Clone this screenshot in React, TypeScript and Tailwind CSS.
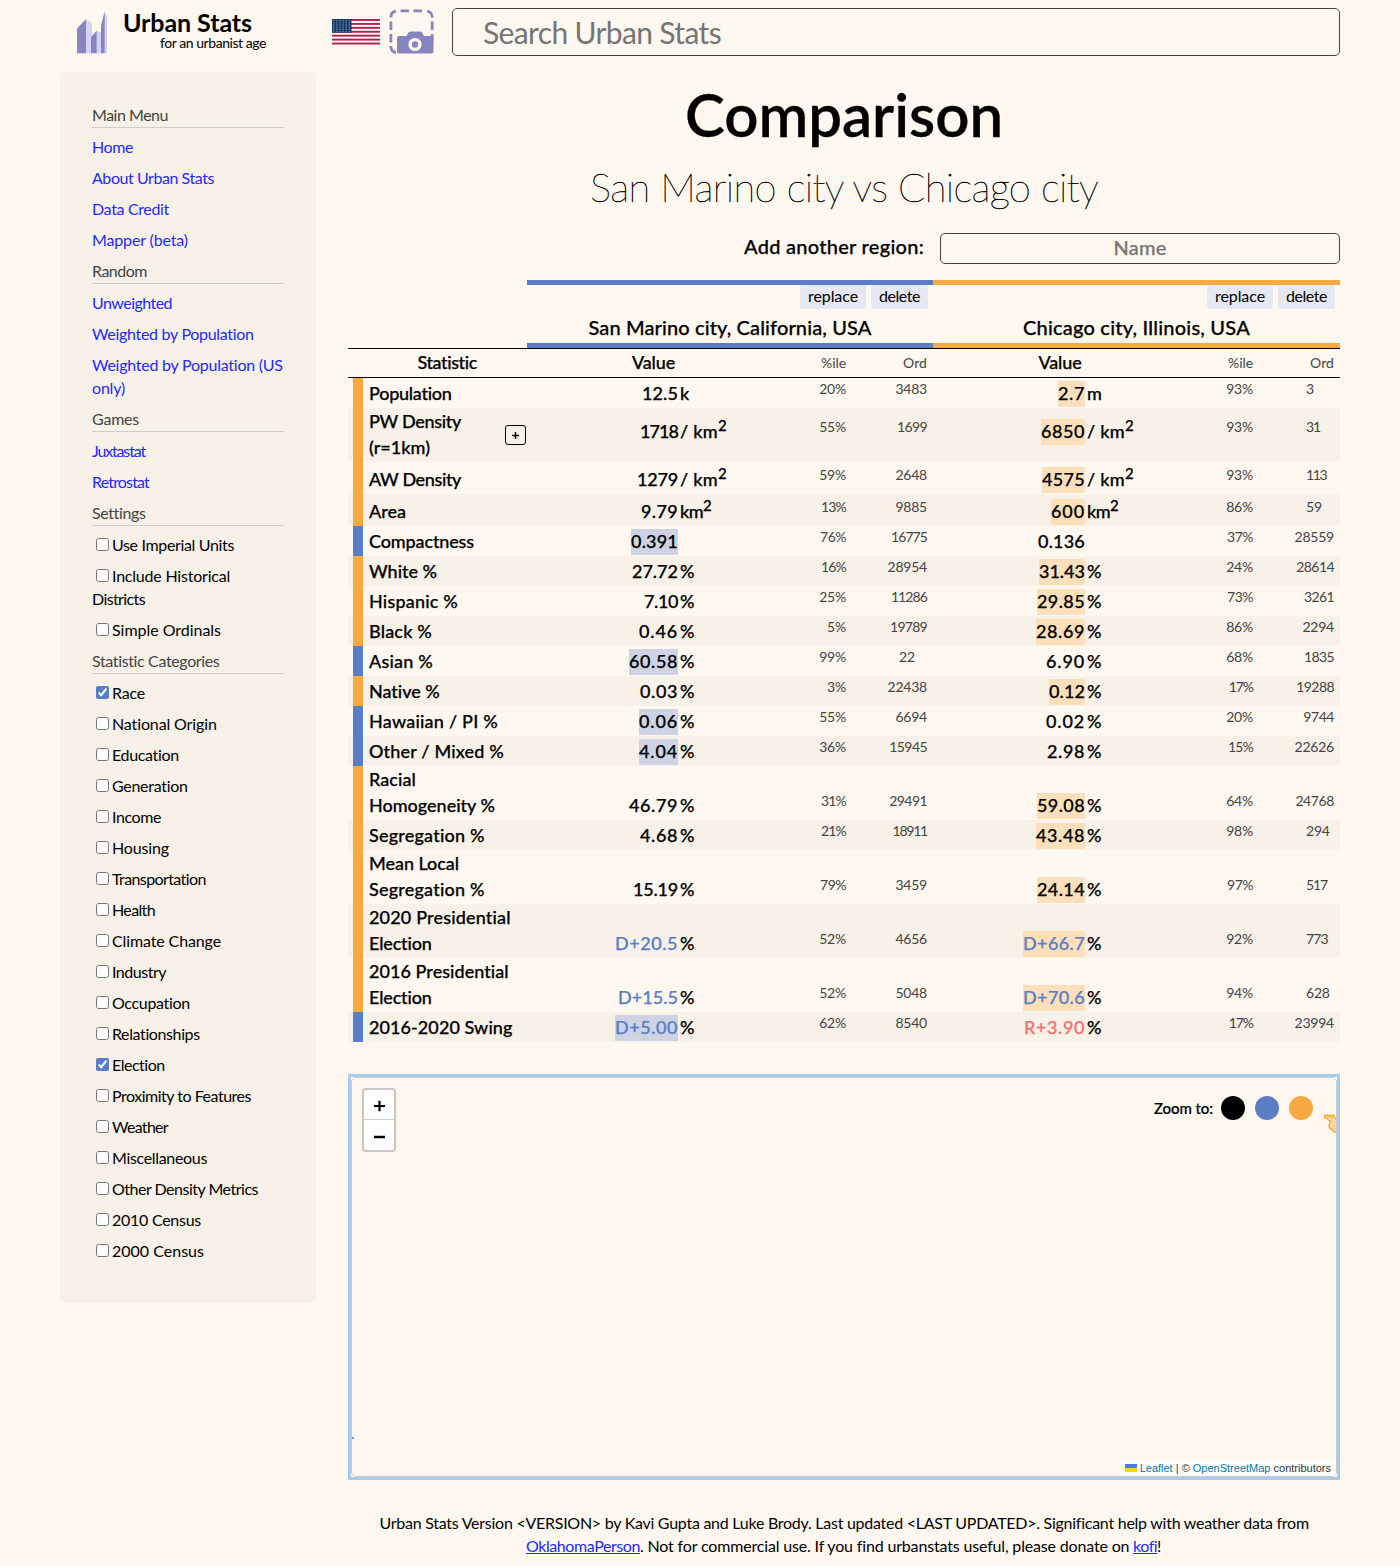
import React, { useLayoutEffect, useRef, useState } from "react";

/** Single line of text whose tracking is tuned so that it fills `w` pixels. */
function Fit({ t, w, className = "" }: { t: string; w: number; className?: string }) {
  const ref = useRef<HTMLSpanElement>(null);
  const [spacing, setSpacing] = useState(0);
  useLayoutEffect(() => {
    if (ref.current) {
      const natural = ref.current.getBoundingClientRect().width - spacing * t.length;
      setSpacing((w - natural) / t.length);
    }
  }, [t, w]);
  return (
    <span className={"inline-block whitespace-nowrap text-left " + className} style={{ width: w }}>
      <span ref={ref} style={{ letterSpacing: spacing }}>
        {t}
      </span>
    </span>
  );
}

type Text = [string, number];

const menu: { title: Text; links: Text[][] }[] = [
  {
    title: ["Main Menu", 76],
    links: [[["Home", 41]], [["About Urban Stats", 122]], [["Data Credit", 77]], [["Mapper (beta)", 96]]],
  },
  {
    title: ["Random", 55],
    links: [
      [["Unweighted", 80]],
      [["Weighted by Population", 162]],
      [["Weighted by Population (US", 191], ["only)", 33]],
    ],
  },
  { title: ["Games", 47], links: [[["Juxtastat", 53]], [["Retrostat", 57]]] },
];

const checks: { title: Text; items: { t: Text; rest?: Text; on?: boolean }[] }[] = [
  {
    title: ["Settings", 53],
    items: [
      { t: ["Use Imperial Units", 122] },
      { t: ["Include Historical", 118], rest: ["Districts", 53] },
      { t: ["Simple Ordinals", 109] },
    ],
  },
  {
    title: ["Statistic Categories", 128],
    items: [
      { t: ["Race", 33], on: true },
      { t: ["National Origin", 105] },
      { t: ["Education", 67] },
      { t: ["Generation", 76] },
      { t: ["Income", 49] },
      { t: ["Housing", 57] },
      { t: ["Transportation", 94] },
      { t: ["Health", 43] },
      { t: ["Climate Change", 109] },
      { t: ["Industry", 54] },
      { t: ["Occupation", 78] },
      { t: ["Relationships", 88] },
      { t: ["Election", 53], on: true },
      { t: ["Proximity to Features", 139] },
      { t: ["Weather", 56] },
      { t: ["Miscellaneous", 95] },
      { t: ["Other Density Metrics", 146] },
      { t: ["2010 Census", 89] },
      { t: ["2000 Census", 92] },
    ],
  },
];

interface Cell {
  v: Text;
  p: string;
  o: string;
}
interface Row {
  name: Text[];
  unit: string;
  win: 0 | 1;
  size?: "pw" | "sup";
  a: Cell;
  b: Cell;
}
const c = (t: string, w: number, p: string, o: string): Cell => ({ v: [t, w], p, o });

const rows: Row[] = [
  { name: [["Population", 83]], unit: "", win: 1, a: c("12.5", 36, "20%", "3483"), b: c("2.7", 27, "93%", "3") },
  { name: [["PW Density", 92], ["(r=1km)", 61]], unit: "/ km", win: 1, size: "pw", a: c("1718", 38, "55%", "1699"), b: c("6850", 44, "93%", "31") },
  { name: [["AW Density", 92]], unit: "/ km", win: 1, size: "sup", a: c("1279", 41, "59%", "2648"), b: c("4575", 43, "93%", "113") },
  { name: [["Area", 37]], unit: "km", win: 1, size: "sup", a: c("9.79", 37, "13%", "9885"), b: c("600", 34, "86%", "59") },
  { name: [["Compactness", 105]], unit: "", win: 0, a: c("0.391", 47, "76%", "16775"), b: c("0.136", 47, "37%", "28559") },
  { name: [["White %", 68]], unit: "%", win: 1, a: c("27.72", 46, "16%", "28954"), b: c("31.43", 46, "24%", "28614") },
  { name: [["Hispanic %", 89]], unit: "%", win: 1, a: c("7.10", 34, "25%", "11286"), b: c("29.85", 48, "73%", "3261") },
  { name: [["Black %", 63]], unit: "%", win: 1, a: c("0.46", 39, "5%", "19789"), b: c("28.69", 49, "86%", "2294") },
  { name: [["Asian %", 64]], unit: "%", win: 0, a: c("60.58", 49, "99%", "22"), b: c("6.90", 39, "68%", "1835") },
  { name: [["Native %", 71]], unit: "%", win: 1, a: c("0.03", 38, "3%", "22438"), b: c("0.12", 36, "17%", "19288") },
  { name: [["Hawaiian / PI %", 129]], unit: "%", win: 0, a: c("0.06", 39, "55%", "6694"), b: c("0.02", 39, "20%", "9744") },
  { name: [["Other / Mixed %", 135]], unit: "%", win: 0, a: c("4.04", 39, "36%", "15945"), b: c("2.98", 38, "15%", "22626") },
  { name: [["Racial", 47], ["Homogeneity %", 126]], unit: "%", win: 1, a: c("46.79", 49, "31%", "29491"), b: c("59.08", 48, "64%", "24768") },
  { name: [["Segregation %", 116]], unit: "%", win: 1, a: c("4.68", 38, "21%", "18911"), b: c("43.48", 49, "98%", "294") },
  { name: [["Mean Local", 90], ["Segregation %", 116]], unit: "%", win: 1, a: c("15.19", 45, "79%", "3459"), b: c("24.14", 48, "97%", "517") },
  { name: [["2020 Presidential", 142], ["Election", 63]], unit: "%", win: 1, a: c("D+20.5", 63, "52%", "4656"), b: c("D+66.7", 62, "92%", "773") },
  { name: [["2016 Presidential", 140], ["Election", 63]], unit: "%", win: 1, a: c("D+15.5", 60, "52%", "5048"), b: c("D+70.6", 62, "94%", "628") },
  { name: [["2016-2020 Swing", 143.5]], unit: "%", win: 0, a: c("D+5.00", 63, "62%", "8540"), b: c("R+3.90", 61, "17%", "23994") },
];

const unitWidths: Record<string, number> = { "%": 15, "/ km": 38, km: 23, k: 9, m: 14 };

/* Advance widths at 14px of the light figures in the percentile and ordinal columns. */
const small = (s: string) =>
  s.split("").reduce((n, ch) => n + (ch === "1" ? 6.2 : ch === "%" ? 11 : ch === "7" ? 7 : 7.9), 0);

function Values({ cell, unit, hl, size }: { cell: Cell; unit: string; hl: string; size?: string }) {
  const first = cell.v[0][0];
  const color = first === "D" ? "text-[#5a7dc3]" : first === "R" ? "text-[#f96d6d]" : "";
  return (
    <div className={"flex flex-1 items-end justify-end pr-[6px] leading-[26px] " + (size === "pw" ? "pb-[17px]" : "pb-px")}>
      <div className={"flex flex-1 justify-end text-[18px] font-medium [-webkit-text-stroke:0.25px] " + color}>
        <span className={"h-[26px] leading-[25px] " + hl}>
          <Fit t={cell.v[0]} w={cell.v[1]} />
        </span>
      </div>
      <div className="flex h-[26px] w-[102px] pl-[2px] text-[18px] font-medium leading-[25px] [-webkit-text-stroke:0.25px]">
        {unit && <Fit t={unit} w={unitWidths[unit]} />}
        {unit.endsWith("km") && <span className="-mt-[6px] text-[15px]">2</span>}
      </div>
      <div className="flex w-[66px] justify-end pb-[5px] text-[14px] text-[#444444]">
        <Fit t={cell.p} w={small(cell.p)} />
      </div>
      <div className="flex w-[81px] justify-end pb-[5px] text-[14px] text-[#444444]">
        <span className="min-w-[28px]">
          <Fit t={cell.o} w={small(cell.o)} />
        </span>
      </div>
    </div>
  );
}

function RegionHeader({ bar, name }: { bar: string; name: Text }) {
  return (
    <div className={"flex h-[68px] flex-col border-y-[5px] " + bar}>
      <div className="flex justify-end gap-[5px] pr-[5px] text-[16px] leading-[22px]">
        <button className="h-6 rounded-[3px] bg-[#e6e9f1] px-2 pb-0.5">
          <Fit t="replace" w={50} />
        </button>
        <button className="h-6 rounded-[3px] bg-[#e6e9f1] px-2 pb-0.5">
          <Fit t="delete" w={41} />
        </button>
      </div>
      <div className="pt-1 text-center text-[20px] font-medium leading-[29px] [-webkit-text-stroke:0.25px]">
        <Fit t={name[0]} w={name[1]} />
      </div>
    </div>
  );
}

function ColumnLabels() {
  return (
    <div className="flex flex-1 justify-end pr-[6px]">
      <div className="flex-1 text-center text-[18px] font-medium leading-[27px] [-webkit-text-stroke:0.25px]">
        <Fit t="Value" w={43} />
      </div>
      <div className="flex w-[66px] justify-end text-[14px] text-[#444444]">
        <Fit t="%ile" w={25} />
      </div>
      <div className="flex w-[81px] justify-end text-[14px] text-[#444444]">
        <Fit t="Ord" w={24} />
      </div>
    </div>
  );
}

function Logo() {
  return (
    <svg width="32" height="44" viewBox="0 0 32 44">
      <path fill="#d4d1fa" d="m10 9 6 4.500v29.800h-6z" />
      <path fill="#8884c0" d="M1 18.500 10 9v34.300H1z" />
      <path fill="#d4d1fa" d="m20.500 20.700 5 2v20.600h-5z" />
      <path fill="#8884c0" d="m15 27 5.700-6.300v22.600H15z" />
      <path fill="#d4d1fa" d="M28.500 1.300 31 7v36.300h-2.500z" />
      <path fill="#8884c0" d="m25 15.500 3.700-14.200v42H25z" />
    </svg>
  );
}

function Flag() {
  return (
    <svg width="48" height="25.5" viewBox="0 0 48 26" preserveAspectRatio="none">
      <rect width="48" height="26" fill="#fff" />
      {[0, 4, 8, 12, 16, 20, 24].map((y) => (
        <rect key={y} y={y} width="48" height="2" fill="#b9204a" />
      ))}
      <rect width="19.500" height="14" fill="#163c69" />
      {[0, 1, 2, 3, 4, 5].map((r) =>
        [0, 1, 2, 3, 4, 5].map((k) => (
          <circle key={r + "-" + k} cx={1.8 + k * 3.1} cy={1.6 + r * 2.2} r=".6" fill="#9fb3ca" />
        ))
      )}
    </svg>
  );
}

function CameraIcon() {
  return (
    <svg width="46" height="46" viewBox="0 0 46 46" fill="none">
      <g stroke="#8884c0" strokeWidth="2.800">
        <path d="M1.900 8.500V7.500a6 6 0 0 1 5-5.400M38.200 2.100a6 6 0 0 1 5 5.900v.8M1.900 37v1.500a6 6 0 0 0 5 5" />
        <path d="M11.500 1.900h8.500M24.500 1.900H33M1.900 12.500v8.500M1.900 25v8.500M43.200 12.500v8.500M43.200 25v7" />
      </g>
      <path
        fill="#8884c0"
        d="M10 27h7.500l1.800-3.200q.8-1.300 2.200-1.300h9.500q1.400 0 2.200 1.300L35 27h7.500q2 0 2 2v13.500q0 2-2 2H10q-2 0-2-2V29q0-2 2-2z"
      />
      <circle cx="26" cy="35.500" r="4.900" stroke="#fff8f0" strokeWidth="3.400" />
    </svg>
  );
}

export default function App() {
  return (
    <div className="h-[1566px] w-[1400px] overflow-hidden bg-[#fff8f0] px-[60px] pt-2 font-['Lato',sans-serif] text-black">
      <header className="flex h-12">
        <div className="flex w-[272px] pl-4 pt-0.5">
          <Logo />
          <div className="pl-[15px]">
            <div className="-mt-0.5 text-[25px] font-bold leading-[28px]">
              <Fit t="Urban Stats" w={129} />
            </div>
            <div className="pl-[37px] text-[14px] leading-[13px]">
              <Fit t="for an urbanist age" w={106} />
            </div>
          </div>
        </div>
        <div className="pt-[11px]">
          <Flag />
        </div>
        <div className="w-[72px] pl-[9.4px] pt-px">
          <CameraIcon />
        </div>
        <div className="flex-1 rounded-[5px] border border-[#444444] pl-[30px] text-[30px] leading-[46px] text-[#757575]">
          <Fit t="Search Urban Stats" w={238} />
        </div>
      </header>

      <div className="mt-4 flex items-start gap-8">
        <aside className="flex h-[1231px] w-64 flex-col gap-2 rounded-[5px] bg-[#f7f1e7] p-8 pt-[31px] text-[16px] leading-[23px]">
          {menu.map((s) => (
            <React.Fragment key={s.title[0]}>
              <div className="-mb-px h-[25px] border-b border-[#cccccc] text-[#444444]">
                <Fit t={s.title[0]} w={s.title[1]} />
              </div>
              {s.links.map((l) => (
                <a key={l[0][0]} className="flex flex-col text-[#222aff]">
                  {l.map((x) => (
                    <Fit key={x[0]} t={x[0]} w={x[1]} />
                  ))}
                </a>
              ))}
            </React.Fragment>
          ))}
          {checks.map((s) => (
            <React.Fragment key={s.title[0]}>
              <div className="-mb-px h-[25px] border-b border-[#cccccc] text-[#444444]">
                <Fit t={s.title[0]} w={s.title[1]} />
              </div>
              {s.items.map((i) => (
                <label key={i.t[0]} className="flex flex-col">
                  <span className="flex h-[23px]">
                    <input
                      type="checkbox"
                      defaultChecked={i.on}
                      className="ml-1 mr-[3px] mt-[5px] h-[13px] w-[13px] accent-[#5a7dc3]"
                    />
                    <Fit t={i.t[0]} w={i.t[1]} />
                  </span>
                  {i.rest && <Fit t={i.rest[0]} w={i.rest[1]} />}
                </label>
              ))}
            </React.Fragment>
          ))}
        </aside>

        <main className="w-[992px]">
          <h1 className="h-[87px] text-center text-[60px] font-semibold leading-[85px] [-webkit-text-stroke:0.3px]">
            <Fit t="Comparison" w={318} />
          </h1>
          <h2 className="h-[74px] text-center text-[40px] font-extralight leading-[56px] [-webkit-text-stroke:0.45px]">
            <Fit t="San Marino city vs Chicago city" w={508} />
          </h2>
          <div className="flex h-[47px] justify-end gap-4 text-[20px] font-medium [-webkit-text-stroke:0.25px]">
            <span className="leading-[27px]">
              <Fit t="Add another region:" w={180} />
            </span>
            <div className="h-[31px] w-[400px] rounded-[5px] border border-[#444444] text-center leading-[27px] text-[#757575]">
              <Fit t="Name" w={53} />
            </div>
          </div>

          <div className="grid grid-cols-[406px_407px] pl-[179px]">
            <RegionHeader bar="border-[#5a7dc3]" name={["San Marino city, California, USA", 283]} />
            <RegionHeader bar="border-[#f7aa41]" name={["Chicago city, Illinois, USA", 227]} />
          </div>
          <div className="flex h-[30px] border-y border-black leading-[28px]">
            <div className="w-[179px] pl-5 text-center text-[18px] font-medium leading-[27px] [-webkit-text-stroke:0.25px]">
              <Fit t="Statistic" w={60} />
            </div>
            <div className="flex w-[406px]">
              <ColumnLabels />
            </div>
            <ColumnLabels />
          </div>
          {rows.map((r, i) => (
            <div
              key={i}
              className={
                "flex pl-[5px] " +
                (i % 2 ? "bg-[#f7f1e7] " : "") +
                (r.name.length > 1 ? "h-[54px]" : r.size ? "h-8" : "h-[30px]")
              }
            >
              <div className={"w-2.5 " + (r.win ? "bg-[#f7aa41]" : "bg-[#5a7dc3]")} />
              <div className="flex w-[164px] items-end justify-between pb-[2px] pl-[6px] pr-px text-[18px] font-medium leading-[26px] [-webkit-text-stroke:0.25px]">
                <div className="flex flex-col">
                  {r.name.map((n) => (
                    <Fit key={n[0]} t={n[0]} w={n[1]} />
                  ))}
                </div>
                {r.size === "pw" && (
                  <button className="mb-[15px] flex h-5 w-[21px] items-center justify-center rounded-[3px] border border-black">
                    <svg width="7" height="7" viewBox="0 0 7 7">
                      <path d="M3.500 0v7M0 3.500h7" stroke="#000" strokeWidth="1.400" />
                    </svg>
                  </button>
                )}
              </div>
              <div className="flex w-[406px]">
                <Values cell={r.a} unit={i ? r.unit : "k"} hl={r.win ? "" : "bg-[#cdd3e3]"} size={r.size} />
              </div>
              <Values cell={r.b} unit={i ? r.unit : "m"} hl={r.win ? "bg-[#fde0bb]" : ""} size={r.size} />
            </div>
          ))}

          <div className="relative mt-8 h-[406px] border-[3px] border-[#a8cbee] bg-white">
            <div className="relative h-full overflow-hidden rounded-[5px] border border-[#cccccc] bg-[#fff8f0]">
              <div className="absolute left-[10px] top-[10px] flex h-16 w-[34px] flex-col rounded-[4px] border-2 border-[#ccc6c0] bg-white">
                <div className="flex h-[30px] items-center justify-center border-b border-[#cccccc] pt-[3px]">
                  <svg width="12" height="12" viewBox="0 0 12 12">
                    <path d="M6.500 .8v10.400M1 6h11" stroke="#000" strokeWidth="2.200" />
                  </svg>
                </div>
                <div className="flex h-[30px] items-center justify-center pt-[3px]">
                  <svg width="12" height="12" viewBox="0 0 12 12">
                    <path d="M1 6h11" stroke="#000" strokeWidth="2.600" />
                  </svg>
                </div>
              </div>
              <div className="absolute right-[23px] top-[18px] flex h-6 items-center gap-2.5">
                <span className="-mr-0.5 text-[15px] font-medium [-webkit-text-stroke:0.2px]">
                  <Fit t="Zoom to:" w={59} />
                </span>
                <span className="h-6 w-6 rounded-full bg-black" />
                <span className="h-6 w-6 rounded-full bg-[#5a7dc3]" />
                <span className="h-6 w-6 rounded-full bg-[#f7aa41]" />
              </div>
              <svg className="absolute right-0 top-9" width="12" height="20" viewBox="0 0 12 20">
                <path
                  d="M.5 .8v3l2.500.4 1.200 1.800 1.600.6.200 2.600-1 1.600.4 3.200 1.800.6.800 1.800 1.600.4.600 1.400L13 18V6l-2-2.500L10 1.200 8.500.8 8 3 6.500 2.200 6 .8 4.500 2.200 3.500.8 2 2z"
                  fill="#fad3a0"
                  stroke="#f7aa41"
                  strokeWidth="1.300"
                />
              </svg>
              <span className="absolute left-0 top-[359px] h-0.5 w-0.5 bg-[#7b97cf]" />
              <div className="absolute bottom-0 right-0 flex h-4 items-center bg-white/80 px-[5px] font-['Liberation_Sans',sans-serif] text-[11px] leading-4 text-[#333333]">
                <svg width="12" height="8" viewBox="0 0 12 8" className="mr-[3px]">
                  <path fill="#4c7be1" d="M0 0h12v4H0z" />
                  <path fill="#ffd500" d="M0 4h12v4H0z" />
                </svg>
                <span className="whitespace-pre">
                  <a className="text-[#0078a8]">Leaflet</a> | © <a className="text-[#0078a8]">OpenStreetMap</a> contributors
                </span>
              </div>
            </div>
          </div>

          <footer className="mt-[31px] flex flex-col items-center text-[16px] leading-[23px]">
            <Fit
              t="Urban Stats Version <VERSION> by Kavi Gupta and Luke Brody. Last updated <LAST UPDATED>. Significant help with weather data from"
              w={929}
            />
            <div className="flex">
              <Fit t="OklahomaPerson" w={114} className="text-[#222aff] underline" />
              <Fit t=". Not for commercial use. If you find urbanstats useful, please donate on " w={493} className="whitespace-pre" />
              <Fit t="kofi" w={24} className="text-[#222aff] underline" />
              <Fit t="!" w={5} />
            </div>
          </footer>
        </main>
      </div>
    </div>
  );
}
